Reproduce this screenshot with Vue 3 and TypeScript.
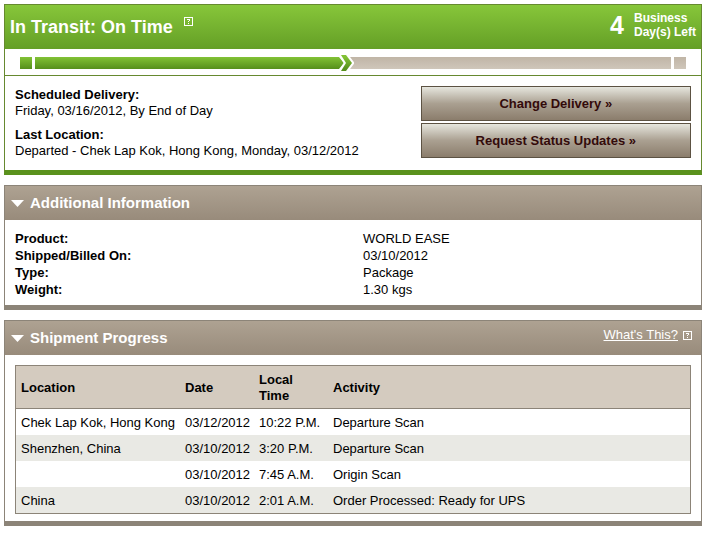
<script setup lang="ts">
interface Detail {
  label: string
  value: string
}

interface Scan {
  location: string
  date: string
  time: string
  activity: string
}

const details: Detail[] = [
  { label: 'Product:', value: 'WORLD EASE' },
  { label: 'Shipped/Billed On:', value: '03/10/2012' },
  { label: 'Type:', value: 'Package' },
  { label: 'Weight:', value: '1.30 kgs' },
]

const scans: Scan[] = [
  { location: 'Chek Lap Kok, Hong Kong', date: '03/12/2012', time: '10:22 P.M.', activity: 'Departure Scan' },
  { location: 'Shenzhen, China', date: '03/10/2012', time: '3:20 P.M.', activity: 'Departure Scan' },
  { location: '', date: '03/10/2012', time: '7:45 A.M.', activity: 'Origin Scan' },
  { location: 'China', date: '03/10/2012', time: '2:01 A.M.', activity: 'Order Processed: Ready for UPS' },
]
</script>

<template>
  <main class="page">
    <section class="panel status">
      <header class="status-head">
        <h1>In Transit: On Time</h1>
        <a class="help" href="#status-help" aria-label="Help">
          <svg width="9" height="9" viewBox="0 0 9 9" shape-rendering="crispEdges">
            <path d="M0 0h9v9H0zM1 1v7h7V1z" fill-rule="evenodd" />
            <path d="M3 2h3v1H3zM5 3h1v1H5zM4 4h1v1H4zM4 6h1v1H4z" />
          </svg>
        </a>
        <p class="days"><strong>4</strong><span>Business<br />Day(s) Left</span></p>
      </header>
      <div class="progress">
        <i class="cap done"></i>
        <div class="track">
          <i class="bar done"></i>
          <svg width="18" height="20" viewBox="0 0 18 20">
            <defs>
              <linearGradient id="bar-fill" gradientUnits="userSpaceOnUse" x1="0" y1="4" x2="0" y2="16">
                <stop offset="0" stop-color="#82c235" />
                <stop offset="1" stop-color="#558f1b" />
              </linearGradient>
              <linearGradient id="rest-fill" gradientUnits="userSpaceOnUse" x1="0" y1="4" x2="0" y2="16">
                <stop offset="0" stop-color="#c0b5a6" />
                <stop offset="1" stop-color="#cfc6ba" />
              </linearGradient>
            </defs>
            <path d="M0 4h3l5 6-5 6H0z" fill="url(#bar-fill)" />
            <path d="M12 4h6v12h-6z" fill="url(#rest-fill)" />
            <path class="chevron" d="M5 2h5l6 8-6 8H5l5-8z" fill="url(#bar-fill)" />
          </svg>
          <i class="bar rest"></i>
        </div>
        <i class="cap rest"></i>
      </div>
      <div class="status-body">
        <dl class="delivery">
          <div>
            <dt>Scheduled Delivery:</dt>
            <dd>Friday, 03/16/2012, By End of Day</dd>
          </div>
          <div>
            <dt>Last Location:</dt>
            <dd>Departed - Chek Lap Kok, Hong Kong, Monday, 03/12/2012</dd>
          </div>
        </dl>
        <div class="actions">
          <button type="button">Change Delivery »</button>
          <button type="button">Request Status Updates »</button>
        </div>
      </div>
    </section>

    <section class="panel">
      <header class="panel-head">
        <button class="toggle" type="button">
          <svg width="13" height="7" viewBox="0 0 26 14"><path d="M0 0h26L13 14z" /></svg>
          Additional Information
        </button>
      </header>
      <dl class="details">
        <template v-for="item in details" :key="item.label">
          <dt>{{ item.label }}</dt>
          <dd>{{ item.value }}</dd>
        </template>
      </dl>
    </section>

    <section class="panel">
      <header class="panel-head">
        <button class="toggle" type="button">
          <svg width="13" height="7" viewBox="0 0 26 14"><path d="M0 0h26L13 14z" /></svg>
          Shipment Progress
        </button>
        <a class="whats" href="#progress-help">
          <span>What's This?</span>
          <svg width="9" height="9" viewBox="0 0 9 9" shape-rendering="crispEdges">
            <path d="M0 0h9v9H0zM1 1v7h7V1z" fill-rule="evenodd" />
            <path d="M3 2h3v1H3zM5 3h1v1H5zM4 4h1v1H4zM4 6h1v1H4z" />
          </svg>
        </a>
      </header>
      <div class="table-wrap">
        <table>
          <colgroup>
            <col class="col-location" />
            <col class="col-short" />
            <col class="col-short" />
            <col />
          </colgroup>
          <thead>
            <tr>
              <th scope="col">Location</th>
              <th scope="col">Date</th>
              <th scope="col">Local<br />Time</th>
              <th scope="col">Activity</th>
            </tr>
          </thead>
          <tbody>
            <tr v-for="(scan, i) in scans" :key="i">
              <td>{{ scan.location }}</td>
              <td>{{ scan.date }}</td>
              <td>{{ scan.time }}</td>
              <td>{{ scan.activity }}</td>
            </tr>
          </tbody>
        </table>
      </div>
    </section>
  </main>
</template>

<style>
body {
  background: #fff;
}
</style>

<style scoped>
.page {
  display: flex;
  flex-direction: column;
  gap: 10px;
  padding: 4px 10px 4px 4px;
  font: 13px/16px "Liberation Sans", Arial, sans-serif;
  color: #000;
}

h1,
p,
dl,
dd {
  margin: 0;
}

dt {
  font-weight: bold;
}

svg {
  display: block;
  flex: none;
}

.panel {
  border: 1px solid #8c8478;
  border-bottom-width: 5px;
}

.status {
  border-color: #66892f;
  border-bottom-color: #5a921d;
}

.status-head {
  display: flex;
  align-items: center;
  height: 44px;
  padding: 0 5px;
  color: #fff;
  background: linear-gradient(#87c63a, #649f26);
}

h1 {
  font-size: 18px;
  line-height: 22px;
}

.help {
  align-self: flex-start;
  margin: 12px 0 0 11px;
}

.help svg,
.whats svg,
.toggle svg {
  fill: #fff;
}

.days {
  display: flex;
  align-items: center;
  gap: 10px;
  margin-left: auto;
  padding-bottom: 4px;
  font-size: 12px;
  font-weight: bold;
  line-height: 14px;
}

.days strong {
  font-size: 25px;
  line-height: 28px;
}

.progress {
  display: flex;
  gap: 3px;
  padding: 8px 15px 6px;
  border-bottom: 1px solid #66892f;
}

.cap {
  width: 12px;
  height: 12px;
}

.track {
  display: flex;
  flex: 1;
  align-items: center;
  height: 12px;
}

.bar {
  height: 12px;
}

.bar.done {
  flex: 301;
}

.bar.rest {
  flex: 317;
}

.chevron {
  stroke: #fff;
  stroke-width: 4;
  paint-order: stroke;
}

.done {
  background: linear-gradient(#82c235, #558f1b);
}

.rest {
  background: linear-gradient(#c0b5a6, #cfc6ba);
}

.status-body {
  display: flex;
  align-items: flex-start;
  justify-content: space-between;
  padding: 10px 10px 11px;
}

.delivery {
  display: flex;
  flex-direction: column;
  gap: 8px;
  padding-top: 1px;
}

.actions {
  display: flex;
  flex-direction: column;
  gap: 2px;
  width: 40%;
}

.actions button {
  height: 35px;
  padding: 0;
  border: 1px solid #5c5243;
  color: #330a0a;
  font: bold 13px/16px "Liberation Sans", Arial, sans-serif;
  background: linear-gradient(#e6e6de, #aaa091 50%, #8b7d6c);
}

.panel-head {
  display: flex;
  justify-content: space-between;
  height: 34px;
  padding: 0 9px 0 6px;
  color: #fff;
  background: linear-gradient(#aea292, #988b7b);
}

.toggle {
  display: flex;
  align-items: center;
  gap: 6px;
  padding: 0;
  border: 0;
  color: inherit;
  font: bold 15px/18px "Liberation Sans", Arial, sans-serif;
  background: none;
}

.whats {
  display: flex;
  align-items: center;
  align-self: flex-start;
  gap: 5px;
  padding-top: 6px;
  color: #fff;
  text-decoration: none;
}

.whats span {
  text-decoration: underline;
}

.details {
  display: grid;
  grid-template-columns: 1fr 1fr;
  padding: 10px 0 7px;
  line-height: 17px;
}

.details > * {
  padding-left: 10px;
}

.table-wrap {
  padding: 10px 10px 7px;
}

table {
  width: 100%;
  table-layout: fixed;
  border: 1px solid #8c8478;
  border-spacing: 0;
}

.col-location {
  width: 164px;
}

.col-short {
  width: 74px;
}

th,
td {
  padding: 6px 5px 4px;
  text-align: left;
  white-space: nowrap;
}

th {
  height: 32px;
  border-bottom: 1px solid #8c8478;
  background: #d4cbbf;
}

td {
  height: 16px;
}

tbody tr:nth-child(even) {
  background: #e9e9e4;
}
</style>
